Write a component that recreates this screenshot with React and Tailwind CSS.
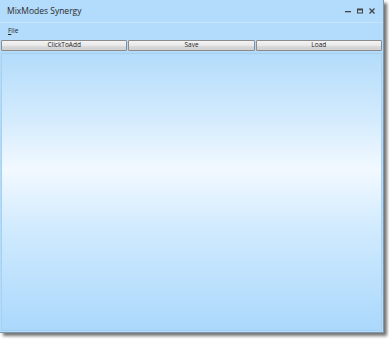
// App.jsx - MixModes Synergy window mock
const Btn = ({ label }) => (
  <button
    className="flex-1 h-[11px] flex items-center justify-center text-[6.5px] leading-none text-[#222] border border-[#8c8c8c] rounded-[1px]"
    style={{ background: 'linear-gradient(#f4f4f4, #e8e8e8 50%, #dcdcdc 51%, #d0d0d0)' }}
  >
    {label}
  </button>
);

export default function App() {
  return (
    <div className="w-[389px] h-[339px] bg-white" style={{ fontFamily: '"Open Sans", "Noto Sans", sans-serif' }}>
      <div className="w-[384px] h-[333px] flex flex-col bg-[#b3dbfb] border-r border-b border-[#7f98ad] shadow-[3px_3px_3px_rgba(0,0,0,0.55)]">
        <div className="h-[23px] flex items-center pl-[7px] pr-[8px] border-b border-[#c6e5fd]">
          <span className="text-[8.5px] text-[#2a2a2a]">MixModes Synergy</span>
          <div className="ml-auto flex items-center gap-[6px]">
            <svg width="6" height="6" viewBox="0 0 6 6"><rect x="0" y="3" width="6" height="1.3" fill="#444" /></svg>
            <svg width="6" height="6" viewBox="0 0 6 6"><rect x="0.5" y="1" width="5" height="4" fill="none" stroke="#444" strokeWidth="1" /><rect x="0.5" y="1" width="5" height="1.4" fill="#444" /></svg>
            <svg width="6" height="6" viewBox="0 0 6 6"><path d="M0.5 0.5 L5.5 5.5 M5.5 0.5 L0.5 5.5" stroke="#444" strokeWidth="1.3" /></svg>
          </div>
        </div>
        <div className="h-[16px] flex items-center pl-[8px]">
          <span className="text-[6.5px] text-[#222]"><span className="underline">F</span>ile</span>
        </div>
        <div className="flex gap-px px-px mt-px">
          <Btn label="ClickToAdd" />
          <Btn label="Save" />
          <Btn label="Load" />
        </div>
        <div
          className="flex-1 mt-[2px] mx-px mb-px border border-[#a7cfee]"
          style={{ background: 'linear-gradient(#b3dcfb 0%, #d6ecfd 25%, #f2f9ff 42%, #d2ebfe 62%, #aad8fc 100%)' }}
        />
      </div>
    </div>
  );
}
